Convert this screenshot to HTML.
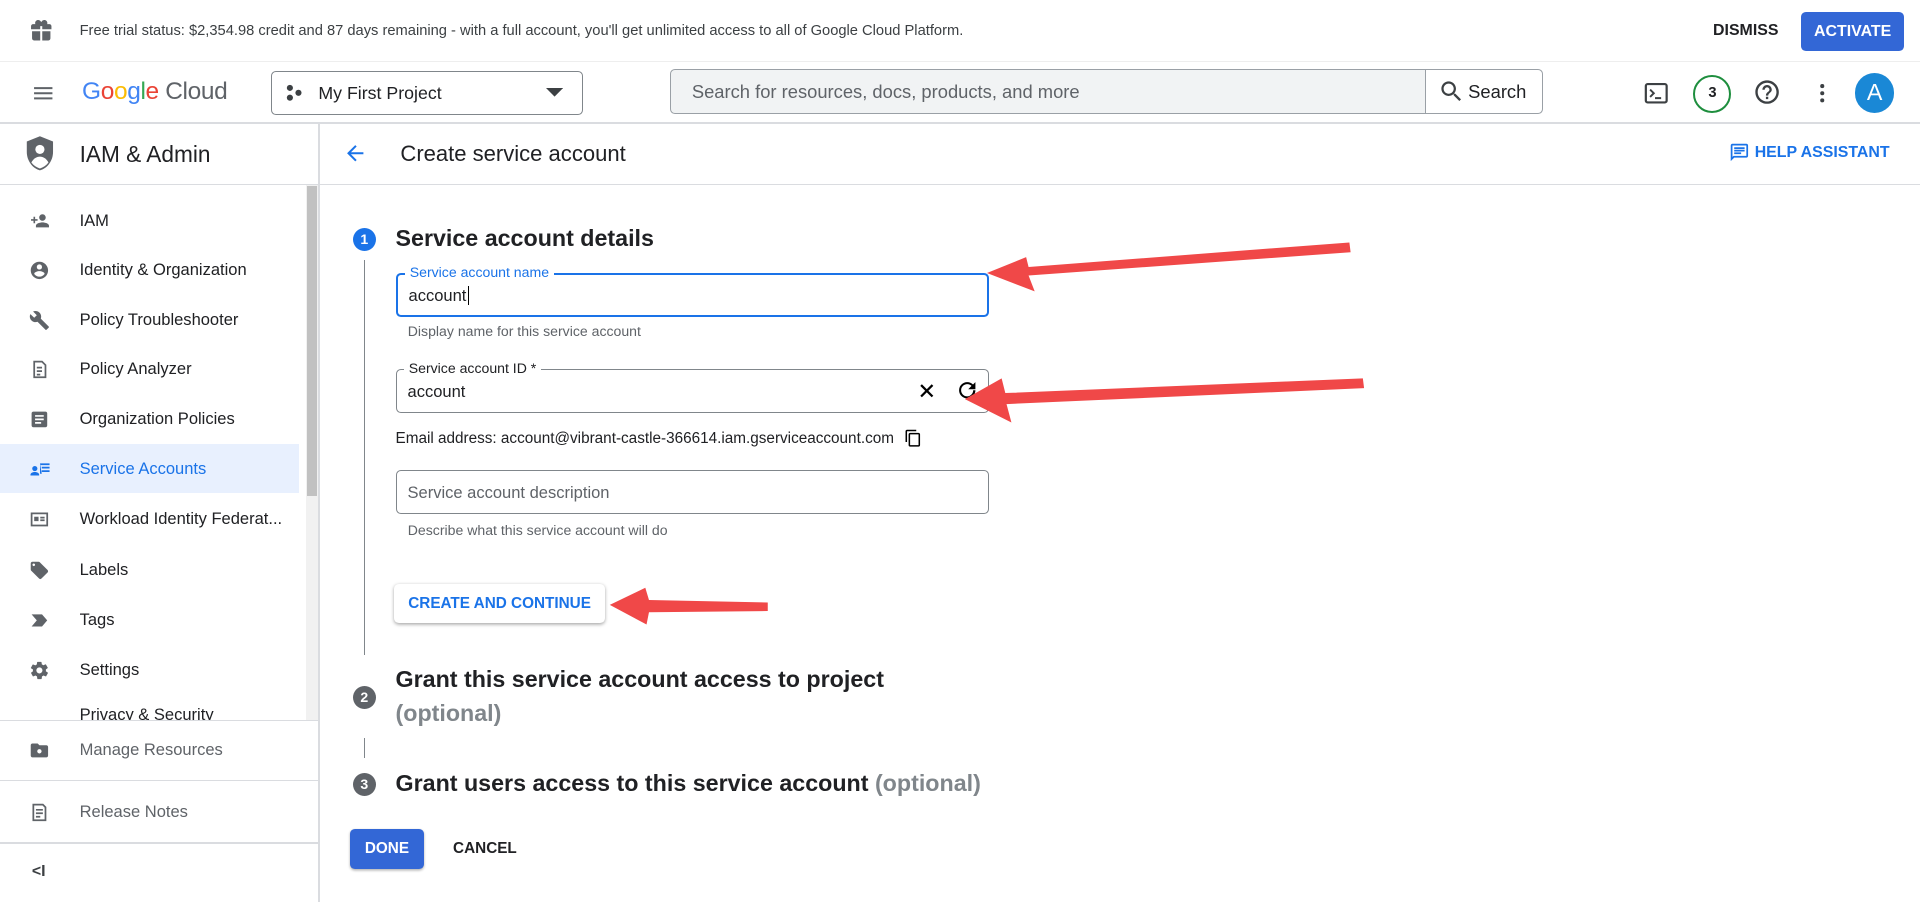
<!DOCTYPE html>
<html><head><meta charset="utf-8"><style>
*{box-sizing:border-box;margin:0;padding:0}
html,body{width:1920px;height:902px;overflow:hidden;background:#fff}
#w{position:relative;width:1568px;height:737px;zoom:1.22449;font-family:"Liberation Sans",Arial,sans-serif;color:#202124}
.a{position:absolute;white-space:nowrap}
.ic{position:absolute}
.nav{position:absolute;left:0;width:244px;height:40px;font-size:13.5px;color:#202124}
.nav span{position:absolute;left:65px;top:12px}
.nav svg{position:absolute;left:24px;top:12px}
.fld{position:absolute;left:323px;width:485px;height:36px;border:1px solid #80868b;border-radius:4px;font-size:13.5px}
.lbl{position:absolute;top:-8px;left:6px;background:#fff;padding:0 4px;font-size:11.5px}
.help{position:absolute;left:333px;font-size:11.5px;color:#5f6368}
.step{position:absolute;left:288px;width:19px;height:19px;border-radius:50%;color:#fff;font-size:11.5px;text-align:center;line-height:19px;font-weight:bold}
.st{position:absolute;left:323px;font-size:19px;font-weight:bold;color:#202124}
</style></head><body><div id="w">
<!-- banner -->
<svg class="ic" style="left:24px;top:15px" width="20" height="20" viewBox="0 0 24 24"><path fill="#5f6368" d="M20 6h-2.2c.1-.3.2-.7.2-1 0-1.7-1.3-3-3-3-1 0-1.9.5-2.5 1.3L12 4l-.5-.7C10.9 2.5 10 2 9 2 7.3 2 6 3.3 6 5c0 .3.1.7.2 1H4c-1.1 0-2 .9-2 2v3h9V8h2v3h9V8c0-1.1-.9-2-2-2zM3 13v7c0 1.1.9 2 2 2h6v-9H3zm10 9h6c1.1 0 2-.9 2-2v-7h-8v9z"/></svg>
<div class="a" style="left:65px;top:19px;font-size:12px;color:#3c4043">Free trial status: $2,354.98 credit and 87 days remaining - with a full account, you'll get unlimited access to all of Google Cloud Platform.</div>
<div class="a" style="left:1399px;top:18px;font-size:13px;font-weight:bold">DISMISS</div>
<div class="a" style="left:1471px;top:10px;width:84px;height:32px;background:#3367d6;border-radius:4px;color:#fff;font-size:13px;font-weight:bold;text-align:center;line-height:32px">ACTIVATE</div>
<div class="a" style="left:0;top:50px;width:1568px;height:1px;background:#eee"></div>
<!-- header -->
<svg class="ic" style="left:25px;top:66px" width="20" height="20" viewBox="0 0 24 24"><path fill="#5f6368" d="M3 18h18v-2H3v2zm0-5h18v-2H3v2zm0-7v2h18V6H3z"/></svg>
<div class="a" style="left:67px;top:64px;font-size:20px;letter-spacing:-.3px"><span style="color:#4285f4">G</span><span style="color:#ea4335">o</span><span style="color:#fbbc05">o</span><span style="color:#4285f4">g</span><span style="color:#34a853">l</span><span style="color:#ea4335">e</span> <span style="color:#5f6368">Cloud</span></div>
<div class="a" style="left:221px;top:58px;width:255px;height:36px;border:1px solid #80868b;border-radius:4px"></div>
<svg class="ic" style="left:233px;top:68px" width="16" height="16" viewBox="0 0 16 16"><circle cx="4" cy="4" r="2.5" fill="#3c4043"/><circle cx="4" cy="12" r="2.5" fill="#3c4043"/><circle cx="11" cy="8" r="2.5" fill="#3c4043"/></svg>
<div class="a" style="left:260px;top:68px;font-size:14.5px">My First Project</div>
<svg class="ic" style="left:446px;top:72px" width="14" height="8"><path d="M0 0h14L7 7z" fill="#3c4043"/></svg>
<div class="a" style="left:547px;top:56px;width:713px;height:37px;border:1px solid #9aa0a6;border-radius:4px;background:#f1f3f4"></div>
<div class="a" style="left:1164px;top:57px;width:95px;height:35px;background:#fff;border-left:1px solid #9aa0a6;border-radius:0 4px 4px 0"></div>
<div class="a" style="left:565px;top:66px;font-size:15px;color:#5f6368">Search for resources, docs, products, and more</div>
<svg class="ic" style="left:1174px;top:64px" width="22" height="22" viewBox="0 0 24 24"><path fill="#3c4043" d="M15.5 14h-.8l-.3-.3c1-1.1 1.6-2.6 1.6-4.2C16 5.9 13.1 3 9.5 3S3 5.9 3 9.5 5.9 16 9.5 16c1.6 0 3.1-.6 4.2-1.6l.3.3v.8l5 5 1.5-1.5-5-5zm-6 0C7 14 5 12 5 9.5S7 5 9.5 5 14 7 14 9.5 12 14 9.5 14z"/></svg>
<div class="a" style="left:1199px;top:66px;font-size:15px">Search</div>
<svg class="ic" style="left:1343px;top:66px" width="20" height="20" viewBox="0 0 20 20"><rect x="1.5" y="2.5" width="17" height="15" rx="1.5" fill="none" stroke="#3c4043" stroke-width="1.8"/><path d="M5 7l3 3-3 3M9 14h5" stroke="#3c4043" stroke-width="1.6" fill="none"/></svg>
<div class="a" style="left:1383px;top:61px;width:31px;height:31px;border:2px solid #1e8e3e;border-radius:50%;text-align:center;line-height:27px;font-size:12px;font-weight:bold">3</div>
<svg class="ic" style="left:1432px;top:64px" width="23" height="23" viewBox="0 0 24 24"><path fill="#3c4043" d="M11 18h2v-2h-2v2zm1-16C6.5 2 2 6.5 2 12s4.5 10 10 10 10-4.5 10-10S17.5 2 12 2zm0 18c-4.4 0-8-3.6-8-8s3.6-8 8-8 8 3.6 8 8-3.6 8-8 8zm0-14c-2.2 0-4 1.8-4 4h2c0-1.1.9-2 2-2s2 .9 2 2c0 2-3 1.8-3 5h2c0-2.3 3-2.5 3-5 0-2.2-1.8-4-4-4z"/></svg>
<svg class="ic" style="left:1478px;top:66px" width="20" height="20" viewBox="0 0 24 24"><circle cx="12" cy="5" r="2" fill="#3c4043"/><circle cx="12" cy="12" r="2" fill="#3c4043"/><circle cx="12" cy="19" r="2" fill="#3c4043"/></svg>
<div class="a" style="left:1515px;top:60px;width:32px;height:32px;border-radius:50%;background:#1a88d6;color:#fff;text-align:center;line-height:32px;font-size:19px">A</div>
<div class="a" style="left:0;top:100px;width:1568px;height:1px;background:#dadce0"></div>
<!-- sidebar -->
<div class="a" style="left:260px;top:101px;width:1px;height:636px;background:#dadce0"></div>
<svg class="ic" style="left:20px;top:110px" width="26" height="30" viewBox="0 0 24 28"><path d="M12 1L2 5v8c0 6.5 4.3 12.5 10 14 5.7-1.5 10-7.5 10-14V5L12 1z" fill="#5f6368"/><circle cx="12" cy="11" r="3.5" fill="#fff"/><path d="M5.5 21c1.5-3 4-4.5 6.5-4.5s5 1.5 6.5 4.5c-1.8 2.3-4 3.8-6.5 4.5-2.5-.7-4.7-2.2-6.5-4.5z" fill="#fff"/></svg>
<div class="a" style="left:65px;top:115px;font-size:18.5px">IAM &amp; Admin</div>
<div class="a" style="left:0;top:150px;width:260px;height:1px;background:#dadce0"></div>
<div class="a" style="left:250px;top:151px;width:10px;height:437px;background:#f1f1f1"></div>
<div class="a" style="left:251px;top:152px;width:8px;height:253px;background:#c1c1c1"></div>
<div class="nav" style="top:160px"><svg width="18" height="16" viewBox="0 0 24 24"><path fill="#5f6368" d="M15 12c2.2 0 4-1.8 4-4s-1.8-4-4-4-4 1.8-4 4 1.8 4 4 4zm-9-2V7H4v3H1v2h3v3h2v-3h3v-2H6zm9 4c-2.7 0-8 1.3-8 4v2h16v-2c0-2.7-5.3-4-8-4z"/></svg><span>IAM</span></div>
<div class="nav" style="top:200px"><svg width="17" height="17" viewBox="0 0 24 24"><path fill="#5f6368" d="M12 2C6.5 2 2 6.5 2 12s4.5 10 10 10 10-4.5 10-10S17.5 2 12 2zm0 3c1.7 0 3 1.3 3 3s-1.3 3-3 3-3-1.3-3-3 1.3-3 3-3zm0 14.2c-2.5 0-4.7-1.3-6-3.2 0-2 4-3.1 6-3.1s6 1.1 6 3.1c-1.3 1.9-3.5 3.2-6 3.2z"/></svg><span>Identity &amp; Organization</span></div>
<div class="nav" style="top:241px"><svg width="17" height="17" viewBox="0 0 24 24"><path fill="#5f6368" d="M22.7 19l-9.1-9.1c.9-2.3.4-5-1.5-6.9-2-2-5-2.4-7.4-1.3L9 6 6 9 1.6 4.7C.4 7.1.9 10.1 2.9 12.1c1.9 1.9 4.6 2.4 6.9 1.5l9.1 9.1c.4.4 1 .4 1.4 0l2.3-2.3c.5-.4.5-1.1.1-1.4z"/></svg><span>Policy Troubleshooter</span></div>
<div class="nav" style="top:281px"><svg width="17" height="17" viewBox="0 0 24 24"><path fill="none" stroke="#5f6368" stroke-width="2" d="M6 3h9l4 4v14H6z M9 10h6M9 14h6M9 18h4"/></svg><span>Policy Analyzer</span></div>
<div class="nav" style="top:322px"><svg width="17" height="17" viewBox="0 0 24 24"><path fill="#5f6368" d="M19 3H5c-1.1 0-2 .9-2 2v14c0 1.1.9 2 2 2h14c1.1 0 2-.9 2-2V5c0-1.1-.9-2-2-2zm-5 14H7v-2h7v2zm3-4H7v-2h10v2zm0-4H7V7h10v2z"/></svg><span>Organization Policies</span></div>
<div class="nav" style="top:363px;background:#e8f0fe;color:#1a73e8"><svg width="18" height="17" viewBox="0 0 24 24"><path fill="#1a73e8" d="M6 8a3 3 0 100 6 3 3 0 000-6zM1 18c0-2 3-3 5-3s5 1 5 3v1H1zM12 5h11v2H12zm2 4h9v2h-9zm0 4h9v2h-9zm-2-8v12h2z"/></svg><span>Service Accounts</span></div>
<div class="nav" style="top:404px"><svg width="17" height="17" viewBox="0 0 24 24"><path fill="none" stroke="#5f6368" stroke-width="2" d="M3 5h18v14H3z"/><path fill="#5f6368" d="M6 9h5v5H6zm7 0h5v2h-5zm0 3h5v2h-5z"/></svg><span>Workload Identity Federat...</span></div>
<div class="nav" style="top:445px"><svg width="17" height="17" viewBox="0 0 24 24"><path fill="#5f6368" d="M21.4 11.6l-9-9C12.1 2.2 11.6 2 11 2H4c-1.1 0-2 .9-2 2v7c0 .6.2 1.1.6 1.4l9 9c.4.4.9.6 1.4.6s1-.2 1.4-.6l7-7c.4-.4.6-.9.6-1.4s-.2-1-.6-1.4zM5.5 7C4.7 7 4 6.3 4 5.5S4.7 4 5.5 4 7 4.7 7 5.5 6.3 7 5.5 7z"/></svg><span>Labels</span></div>
<div class="nav" style="top:486px"><svg width="17" height="17" viewBox="0 0 24 24"><path fill="#5f6368" d="M3 5h12l6 7-6 7H3l6-7z"/></svg><span>Tags</span></div>
<div class="nav" style="top:527px"><svg width="17" height="17" viewBox="0 0 24 24"><path fill="#5f6368" d="M19.4 13c0-.3.1-.6.1-1s0-.7-.1-1l2.1-1.6c.2-.2.2-.4.1-.6l-2-3.5c-.1-.2-.4-.3-.6-.2l-2.5 1c-.5-.4-1.1-.7-1.7-1l-.4-2.6c0-.2-.2-.4-.5-.4h-4c-.3 0-.5.2-.5.4l-.4 2.7c-.6.2-1.1.6-1.7 1l-2.5-1c-.2-.1-.5 0-.6.2l-2 3.5c-.1.2-.1.5.1.6L4.6 11c0 .3-.1.7-.1 1s0 .7.1 1l-2.1 1.6c-.2.2-.2.4-.1.6l2 3.5c.1.2.4.3.6.2l2.5-1c.5.4 1.1.7 1.7 1l.4 2.7c0 .2.2.4.5.4h4c.3 0 .5-.2.5-.4l.4-2.7c.6-.3 1.2-.6 1.7-1l2.5 1c.2.1.5 0 .6-.2l2-3.5c.1-.2.1-.5-.1-.6L19.4 13zM12 15.5c-1.9 0-3.5-1.6-3.5-3.5s1.6-3.5 3.5-3.5 3.5 1.6 3.5 3.5-1.6 3.5-3.5 3.5z"/></svg><span>Settings</span></div>
<div class="a" style="left:0;top:578px;width:250px;height:10px;overflow:hidden"><div class="a" style="left:65px;top:-2px;font-size:13.5px">Privacy &amp; Security</div></div>
<div class="a" style="left:0;top:588px;width:260px;height:1px;background:#dadce0"></div>
<svg class="ic" style="left:24px;top:604px" width="17" height="17" viewBox="0 0 24 24"><path fill="#5f6368" d="M20 6h-8l-2-2H4c-1.1 0-2 .9-2 2v12c0 1.1.9 2 2 2h16c1.1 0 2-.9 2-2V8c0-1.1-.9-2-2-2z"/><circle cx="12" cy="13" r="2.5" fill="#fff"/></svg>
<div class="a" style="left:65px;top:604px;font-size:13.5px;color:#5f6368">Manage Resources</div>
<div class="a" style="left:0;top:637px;width:260px;height:1px;background:#dadce0"></div>
<svg class="ic" style="left:24px;top:655px" width="17" height="17" viewBox="0 0 24 24"><path fill="none" stroke="#5f6368" stroke-width="2" d="M5 3h11l3 3v15H5z M8 9h8M8 13h8M8 17h5"/></svg>
<div class="a" style="left:65px;top:655px;font-size:13.5px;color:#5f6368">Release Notes</div>
<div class="a" style="left:0;top:688px;width:260px;height:1px;background:#dadce0"></div>
<div class="a" style="left:26px;top:705px;font-size:13px;font-weight:bold;color:#3c4043">&lt;I</div>
<!-- main -->
<svg class="ic" style="left:280px;top:115px" width="20" height="20" viewBox="0 0 24 24"><path fill="#1a73e8" d="M20 11H7.8l5.6-5.6L12 4l-8 8 8 8 1.4-1.4L7.8 13H20v-2z"/></svg>
<div class="a" style="left:327px;top:115px;font-size:18px">Create service account</div>
<svg class="ic" style="left:1412px;top:116px" width="17" height="17" viewBox="0 0 24 24"><path fill="#1a73e8" d="M20 2H4c-1.1 0-2 .9-2 2v18l4-4h14c1.1 0 2-.9 2-2V4c0-1.1-.9-2-2-2zm0 14H5.2L4 17.2V4h16v12zM6 12h8v2H6zm0-3h12v2H6zm0-3h12v2H6z"/></svg>
<div class="a" style="left:1433px;top:118px;font-size:13px;font-weight:bold;color:#1a73e8">HELP ASSISTANT</div>
<div class="a" style="left:261px;top:150px;width:1307px;height:1px;background:#dadce0"></div>
<div class="step" style="top:186px;background:#1a73e8">1</div>
<div class="st" style="top:184px">Service account details</div>
<div class="a" style="left:297px;top:212px;width:1px;height:323px;background:#80868b"></div>
<div class="fld" style="top:223px;border:2px solid #1a73e8;height:36px"><div class="lbl" style="color:#1a73e8;top:-9px">Service account name</div><div class="a" style="left:9px;top:9px">account<span style="border-left:1px solid #000;margin-left:1px"></span></div></div>
<div class="help" style="top:264px">Display name for this service account</div>
<div class="fld" style="top:301px"><div class="lbl" style="color:#202124">Service account ID *</div><div class="a" style="left:9px;top:10px">account</div>
<svg class="ic" style="left:425px;top:9px" width="16" height="16" viewBox="0 0 24 24"><path d="M5 5l14 14M19 5L5 19" stroke="#000" stroke-width="2.8"/></svg>
<svg class="ic" style="left:456px;top:7px" width="20" height="20" viewBox="0 0 24 24"><path fill="#000" d="M17.65 6.35A7.96 7.96 0 0012 4a8 8 0 108 8h-2.2A5.9 5.9 0 0112 18a6 6 0 010-12c1.66 0 3.14.69 4.22 1.78L13 11h7V4l-2.35 2.35z"/></svg></div>
<div class="a" style="left:323px;top:351px;font-size:12.5px">Email address: account@vibrant-castle-366614.iam.gserviceaccount.com</div>
<svg class="ic" style="left:738px;top:350px" width="15" height="15" viewBox="0 0 24 24"><path fill="#000" d="M16 1H4c-1.1 0-2 .9-2 2v14h2V3h12V1zm3 4H8c-1.1 0-2 .9-2 2v14c0 1.1.9 2 2 2h11c1.1 0 2-.9 2-2V7c0-1.1-.9-2-2-2zm0 16H8V7h11v14z"/></svg>
<div class="fld" style="top:384px"><div class="a" style="left:9px;top:10px;color:#5f6368">Service account description</div></div>
<div class="help" style="top:426px">Describe what this service account will do</div>
<div class="a" style="left:322px;top:477px;width:172px;height:32px;border-radius:4px;box-shadow:0 1px 3px rgba(0,0,0,.35);background:#fff;color:#1a73e8;font-size:12.5px;font-weight:bold;text-align:center;line-height:32px">CREATE AND CONTINUE</div>
<div class="step" style="top:560px;background:#5f6368">2</div>
<div class="st" style="top:544px">Grant this service account access to project</div>
<div class="a" style="left:323px;top:572px;font-size:19px;font-weight:bold;color:#80868b">(optional)</div>
<div class="a" style="left:297px;top:603px;width:1px;height:16px;background:#80868b"></div>
<div class="step" style="top:631px;background:#5f6368">3</div>
<div class="st" style="top:629px">Grant users access to this service account <span style="color:#80868b">(optional)</span></div>
<div class="a" style="left:286px;top:677px;width:60px;height:33px;background:#3367d6;border-radius:4px;color:#fff;font-size:12.5px;font-weight:bold;text-align:center;line-height:33px;box-shadow:0 1px 2px rgba(0,0,0,.3)">DONE</div>
<div class="a" style="left:370px;top:686px;font-size:12.5px;font-weight:bold">CANCEL</div>
<!-- arrows -->
<svg class="ic" style="left:0;top:0" width="1568" height="737"><g fill="#f04848">
<polygon points="1102,198 1103,206 840,225 845,238 806,223 838,210 840,218"/>
<polygon points="1113,309 1114,317 822,330 826,345 788,326 818,309 821,321"/>
<polygon points="627,492 627,499 530,500 528,510 498,494 527,480 530,490"/>
</g></svg>
</div></body></html>
